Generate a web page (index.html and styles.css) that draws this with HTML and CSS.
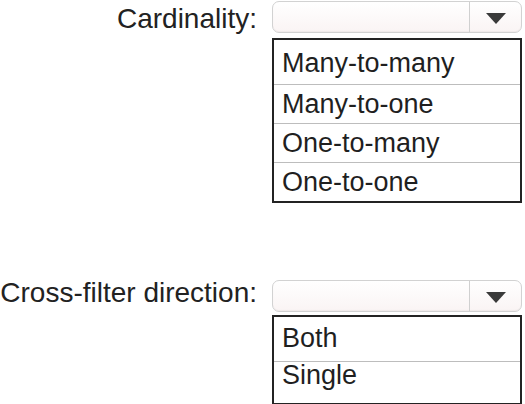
FILE: index.html
```html
<!DOCTYPE html>
<html lang="en">
<head>
<meta charset="utf-8">
<title>Relationship options</title>
<link rel="stylesheet" href="styles.css">
</head>
<body>
<div class="page">
  <section class="group group-card">
    <span class="label label-card">Cardinality:</span>
    <div class="select">
      <span class="select-value"></span>
      <span class="select-btn"><svg class="arrow" width="20" height="11" viewBox="0 0 20 11"><polygon points="0,0 20,0 10,11" fill="#3a3a3a"/></svg></span>
    </div>
    <ul class="options">
      <li>Many-to-many</li>
      <li>Many-to-one</li>
      <li>One-to-many</li>
      <li>One-to-one</li>
    </ul>
  </section>
  <section class="group group-cross">
    <span class="label label-cross">Cross-filter direction:</span>
    <div class="select">
      <span class="select-value"></span>
      <span class="select-btn"><svg class="arrow" width="20" height="11" viewBox="0 0 20 11"><polygon points="0,0 20,0 10,11" fill="#3a3a3a"/></svg></span>
    </div>
    <ul class="options options-cross">
      <li>Both</li>
      <li>Single</li>
    </ul>
  </section>
</div>
</body>
</html>
```
FILE: styles.css
```css
html, body {
  margin: 0;
  background: #ffffff;
}
body {
  font-family: "Liberation Sans", Arial, sans-serif;
  color: #1f1f1f;
}
.page {
  width: 525px;
}
.group {
  display: grid;
  grid-template-columns: 260px 250px;
  column-gap: 12px;
  row-gap: 3px;
}
.group-card {
  padding-top: 1px;
}
.group-cross {
  margin-top: 77px;
}
.label {
  grid-column: 1;
  text-align: right;
  padding-right: 3px;
  font-size: 28px;
  line-height: 32px;
  white-space: nowrap;
  color: #222222;
}
.label-card {
  padding-top: 2px;
}
.label-cross {
  margin-top: -3px;
}
.select {
  grid-column: 2;
  height: 32px;
  box-sizing: border-box;
  border: 1px solid #d2d2d2;
  border-radius: 7px;
  background: linear-gradient(#ffffff, #faf4f4);
  box-shadow: inset 0 -1px 1px rgba(0, 0, 0, 0.04);
  display: flex;
}
.select-value {
  flex: 1;
}
.select-btn {
  width: 51px;
  border-left: 1px solid #d0d0d0;
  display: flex;
  align-items: center;
  justify-content: center;
}
.arrow {
  margin-top: 3px;
  display: block;
}
.options {
  grid-column: 2;
  margin: 0;
  padding: 0;
  list-style: none;
  border: 2px solid #232323;
  font-size: 27px;
  color: #1f1f1f;
}
.options li {
  line-height: 38px;
  padding-left: 8px;
  border-top: 1px solid #bdbdbd;
  white-space: nowrap;
}
.options li:first-child {
  border-top: 0;
  padding-top: 4px;
  padding-bottom: 2px;
}
.options-cross li:first-child {
  padding-top: 2px;
  padding-bottom: 4px;
}
.options-cross li:last-child {
  line-height: 27px;
  padding-bottom: 14px;
}
```
